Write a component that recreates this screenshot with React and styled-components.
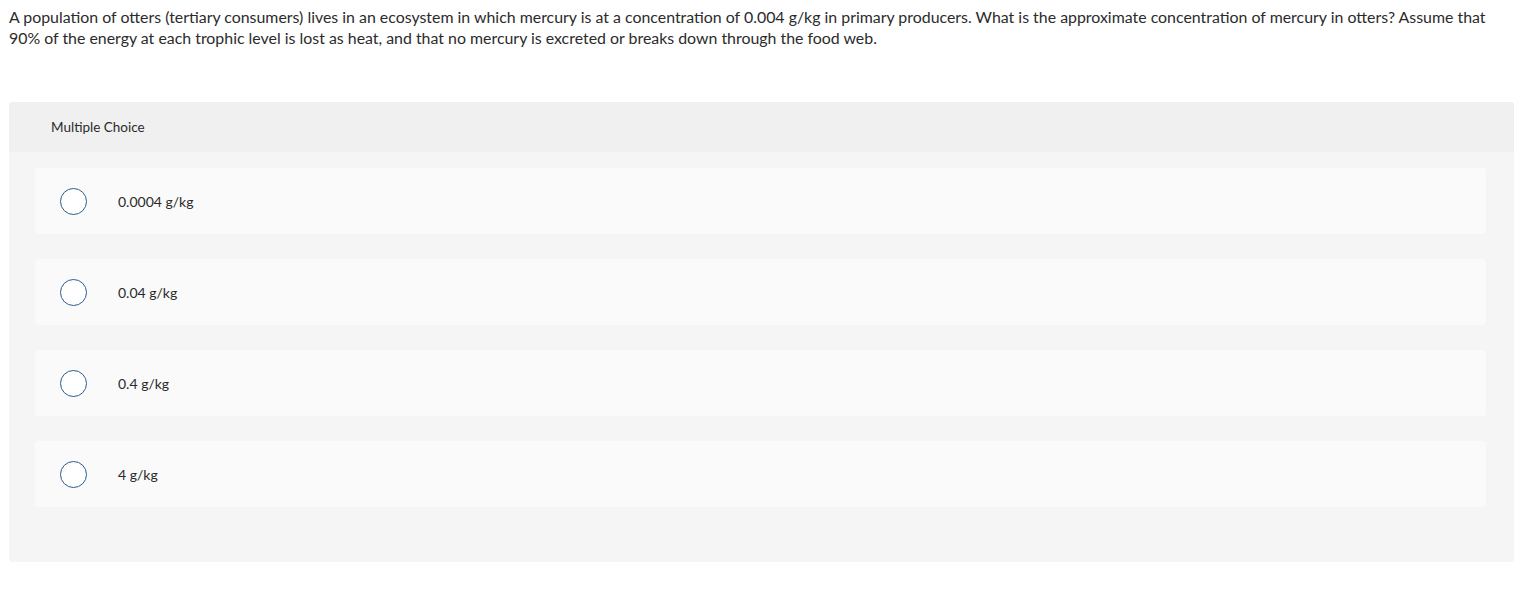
import React from "react";
import styled, { createGlobalStyle } from "styled-components";

const Global = createGlobalStyle`
  html, body { margin: 0; padding: 0; background: #fff; }
  body { font-family: "Lato", "Open Sans", Arial, sans-serif; color: #333; }
`;

const Page = styled.div`
  padding: 6px 17px 40px 8px;
`;

const Question = styled.p`
  margin: 0 0 54px 1px;
  font-size: 15.9px;
  line-height: 21px;
  color: #2b2b2b;
`;

const Panel = styled.section`
  margin-left: 1px;
  background: #f5f5f5;
  border-radius: 3px;
  padding-bottom: 55px;
`;

const Header = styled.div`
  background: #f0f0f0;
  height: 50px;
  display: flex;
  align-items: center;
  padding-left: 42px;
  font-size: 13.5px;
  color: #2b2b2b;
  border-radius: 3px 3px 0 0;
`;

const List = styled.div`
  display: flex;
  flex-direction: column;
  gap: 25px;
  padding: 16px 28px 0 26px;
`;

const Option = styled.label`
  display: flex;
  align-items: center;
  height: 66px;
  background: #fafafa;
  border-radius: 4px;
  padding-left: 25px;
  cursor: pointer;
`;

const Radio = styled.span`
  box-sizing: border-box;
  width: 27px;
  height: 27px;
  border: 1.5px solid #2c5b8e;
  border-radius: 50%;
  background: #fff;
  flex: none;
`;

const OptionText = styled.span`
  margin-left: 31px;
  font-size: 14px;
  color: #2b2b2b;
`;

const options = ["0.0004 g/kg", "0.04 g/kg", "0.4 g/kg", "4 g/kg"];

export default function App() {
  return (
    <>
      <Global />
      <Page>
        <Question>
          A population of otters (tertiary consumers) lives in an ecosystem in which mercury is at a concentration of 0.004 g/kg in primary producers. What is the approximate concentration of mercury in otters? Assume that 90% of the energy at each trophic level is lost as heat, and that no mercury is excreted or breaks down through the food web.
        </Question>
        <Panel>
          <Header>Multiple Choice</Header>
          <List>
            {options.map((o) => (
              <Option key={o}>
                <Radio />
                <OptionText>{o}</OptionText>
              </Option>
            ))}
          </List>
        </Panel>
      </Page>
    </>
  );
}
